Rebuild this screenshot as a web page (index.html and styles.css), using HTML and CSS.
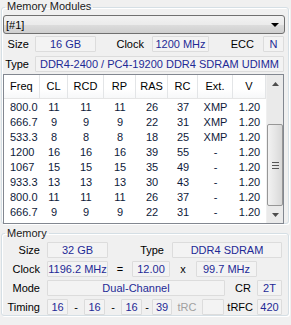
FILE: index.html
```html
<!DOCTYPE html>
<html>
<head>
<meta charset="utf-8">
<link rel="stylesheet" href="styles.css">
</head>
<body>
<fieldset class="group g1">
  <legend>Memory Modules</legend>
  <div class="select"><span>[#1]</span><span class="caret"></span></div>
  <div class="row r-size">
    <span class="lbl w32">Size</span>
    <span class="box w61">16 GB</span>
    <span class="lbl w56">Clock</span>
    <span class="box w57">1200 MHz</span>
    <span class="lbl w54">ECC</span>
    <span class="box w21">N</span>
  </div>
  <div class="row r-type">
    <span class="lbl w32">Type</span>
    <span class="box w249">DDR4-2400 / PC4-19200 DDR4 SDRAM UDIMM</span>
  </div>
  <div class="list">
    <div class="table">
      <div class="thead">
        <span class="c-freq">Freq</span><span>CL</span><span>RCD</span><span>RP</span><span>RAS</span><span>RC</span><span>Ext.</span><span>V</span>
      </div>
      <div class="tr"><span class="c-freq">800.0</span><span>11</span><span>11</span><span>11</span><span>26</span><span>37</span><span>XMP</span><span>1.20</span></div>
      <div class="tr"><span class="c-freq">666.7</span><span>9</span><span>9</span><span>9</span><span>22</span><span>31</span><span>XMP</span><span>1.20</span></div>
      <div class="tr"><span class="c-freq">533.3</span><span>8</span><span>8</span><span>8</span><span>18</span><span>25</span><span>XMP</span><span>1.20</span></div>
      <div class="tr"><span class="c-freq">1200</span><span>16</span><span>16</span><span>16</span><span>39</span><span>55</span><span>-</span><span>1.20</span></div>
      <div class="tr"><span class="c-freq">1067</span><span>15</span><span>15</span><span>15</span><span>35</span><span>49</span><span>-</span><span>1.20</span></div>
      <div class="tr"><span class="c-freq">933.3</span><span>13</span><span>13</span><span>13</span><span>30</span><span>43</span><span>-</span><span>1.20</span></div>
      <div class="tr"><span class="c-freq">800.0</span><span>11</span><span>11</span><span>11</span><span>26</span><span>37</span><span>-</span><span>1.20</span></div>
      <div class="tr"><span class="c-freq">666.7</span><span>9</span><span>9</span><span>9</span><span>22</span><span>31</span><span>-</span><span>1.20</span></div>
    </div>
    <div class="sbar">
      <div class="sbtn"><svg width="7" height="4" viewBox="0 0 7 4"><path d="M0 4 L3.5 0 L7 4 Z" fill="#4d4d4d"/></svg></div>
      <div class="strack">
        <div class="thumb"><span class="grip"></span><span class="grip"></span><span class="grip"></span></div>
      </div>
      <div class="sbtn"><svg width="7" height="4" viewBox="0 0 7 4"><path d="M0 0 L7 0 L3.5 4 Z" fill="#4d4d4d"/></svg></div>
    </div>
  </div>
</fieldset>
<fieldset class="group g2">
  <legend>Memory</legend>
  <div class="row m-row">
    <span class="lbl w45">Size</span>
    <span class="box w61">32 GB</span>
    <span class="lbl w64">Type</span>
    <span class="box w110">DDR4 SDRAM</span>
  </div>
  <div class="row m-row">
    <span class="lbl w45">Clock</span>
    <span class="box w61">1196.2 MHz</span>
    <span class="sym w24">=</span>
    <span class="box w38">12.00</span>
    <span class="sym w26">x</span>
    <span class="box w61">99.7 MHz</span>
  </div>
  <div class="row m-row">
    <span class="lbl w45">Mode</span>
    <span class="box w178">Dual-Channel</span>
    <span class="lbl w32b">CR</span>
    <span class="box w25">2T</span>
  </div>
  <div class="row m-row">
    <span class="lbl w45">Timing</span>
    <span class="box w21">16</span>
    <span class="sym w16">-</span>
    <span class="box w21">16</span>
    <span class="sym w16">-</span>
    <span class="box w21">16</span>
    <span class="sym w10">-</span>
    <span class="box w20">39</span>
    <span class="sym w30 dim">tRC</span>
    <span class="box w22"></span>
    <span class="lbl w33">tRFC</span>
    <span class="box w25">420</span>
  </div>
</fieldset>
</body>
</html>
```
FILE: styles.css
```css
* { box-sizing: border-box; }
html, body { margin: 0; padding: 0; }
body {
  width: 291px;
  height: 325px;
  background: #f0f0f0;
  font-family: "Liberation Sans", Arial, sans-serif;
  font-size: 11px;
  color: #000;
  overflow: hidden;
}
.group {
  margin: 0 0 0 1px;
  width: 288px;
  border: 1px solid #d5dfe5;
  border-radius: 3px;
  padding: 0 3px 0 1px;
  box-shadow: inset 1px 1px 0 #fff, 1px 1px 0 #fff;
}
.group legend {
  padding: 0 2px;
  margin-left: 2px;
  height: 14px;
  line-height: 13px;
  color: #1b1b1b;
}
.g1 { height: 224px; margin-top: 0; }
.g2 { height: 90px; margin-top: 2px; }
.g2 legend { line-height: 15px; height: 15px; }
.select {
  margin-top: 1px;
  height: 19px;
  border: 1px solid #707070;
  border-radius: 3px;
  background: linear-gradient(#f2f2f2, #ebebeb 50%, #dddddd 51%, #cfcfcf);
  display: flex;
  align-items: center;
  justify-content: space-between;
  padding: 0 4px 0 2px;
}
.caret {
  width: 0; height: 0;
  border-left: 4px solid transparent;
  border-right: 4px solid transparent;
  border-top: 4px solid #000;
  margin-right: 1px;
}
.row { display: flex; align-items: center; }
.r-size { margin-top: 2px; height: 16px; }
.r-type { margin-top: 3px; height: 17px; }
.lbl { text-align: right; padding-right: 7px; white-space: nowrap; color: #000; }
.sym { text-align: center; color: #000; }
.dim { color: #a0a0a0; }
.box {
  height: 16px;
  border: 1px solid #dcdcdc;
  background: #f3f3f3;
  color: #1e2a96;
  text-align: center;
  line-height: 14px;
  white-space: nowrap;
  overflow: hidden;
  border-radius: 1px;
}
.w10 { width: 10px; } .w16 { width: 16px; } .w20 { width: 20px; } .w21 { width: 21px; }
.w22 { width: 22px; } .w24 { width: 24px; } .w25 { width: 25px; } .w26 { width: 26px; }
.w30 { width: 30px; } .w32 { width: 32px; } .w33 { width: 33px; padding-right: 4px; }
.w32b { width: 32px; padding-right: 6px; }
.w38 { width: 38px; } .w45 { width: 44px; }
.w54 { width: 54px; padding-right: 9px; } .w56 { width: 56px; padding-right: 8px; }
.w57 { width: 57px; } .w61 { width: 61px; } .w64 { width: 64px; padding-right: 8px; }
.w110 { width: 110px; } .w178 { width: 178px; } .w249 { width: 249px; }
.r-size .w32 { padding-right: 6px; }
.r-type .w32 { padding-right: 6px; }
.list {
  margin-top: 2px;
  height: 150px;
  width: 281px;
  border: 1px solid #828790;
  background: #fff;
  display: flex;
}
.table { width: 262px; }
.thead, .tr {
  display: grid;
  grid-template-columns: 36px 28px 36px 32px 32px 30px 35px 33px;
}
.thead {
  height: 24px;
  background: linear-gradient(#ffffff, #ffffff 60%, #f7f8f9);
  border-bottom: 1px solid #e5e5e5;
}
.thead span {
  border-right: 1px solid #e3e5e7;
  text-align: center;
  line-height: 23px;
  color: #000;
}
.tr { height: 15px; }
.thead + .tr { margin-top: 1px; }
.tr span { text-align: center; line-height: 15px; color: #0e1a3a; }
.thead .c-freq, .tr .c-freq { text-align: left; padding-left: 6px; }
.sbar {
  width: 17px;
  display: flex;
  flex-direction: column;
  background: #eaeaea;
  border-left: 1px solid #f0f0f0;
}
.sbtn {
  height: 17px;
  display: flex;
  align-items: center;
  justify-content: center;
}
.strack { flex: 1; position: relative; }
.thumb {
  position: absolute;
  left: 0; right: 0;
  top: 32px;
  height: 82px;
  border: 1px solid #979797;
  border-radius: 2px;
  background: linear-gradient(to right, #f2f2f2, #e6e6e6 50%, #d8d8d8);
  display: flex;
  flex-direction: column;
  align-items: center;
  justify-content: center;
  gap: 2px;
}
.grip { width: 7px; height: 1px; background: #555; }
.m-row { height: 16px; margin-top: 3px; }
.g2 .m-row:first-of-type { margin-top: 1px; }
```
